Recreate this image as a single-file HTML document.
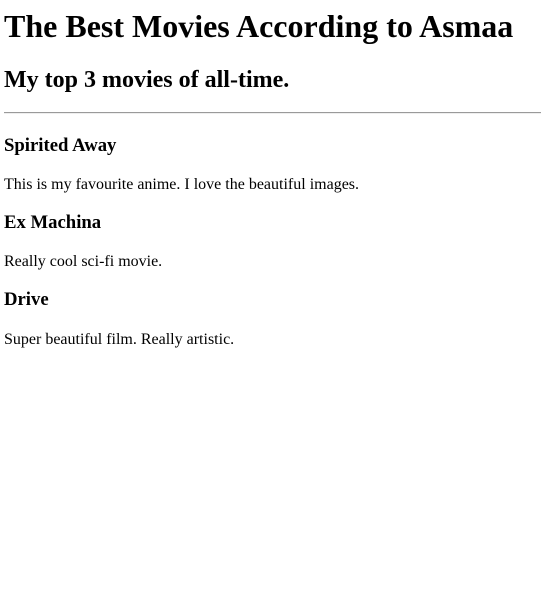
<!DOCTYPE html>
<html><head><meta charset="utf-8"><style>
html,body{background:#fff;}
body{margin:0 0 0 4px;font-family:"Liberation Serif",serif;color:#000;}
h1{font-size:32px;margin:8px 0 0;line-height:37px;}
h2{font-size:24px;margin:21.92px 0 17.92px;line-height:27.6px;}
hr{margin:8px 0 12px;border:0;border-top:1px solid #9a9a9a;border-bottom:1px solid #eee;height:0;}
h3{font-size:18.72px;margin:18.72px 0 19.72px;line-height:21.5px;}
hr + h3{margin-top:20.72px}
p{font-size:16px;margin:16px 0 0;line-height:18px;}
p + h3{margin-top:17.9px}
</style></head><body>
<h1>The Best Movies According to Asmaa</h1>
<h2>My top 3 movies of all-time.</h2>
<hr>
<h3>Spirited Away</h3>
<p>This is my favourite anime. I love the beautiful images.</p>
<h3>Ex Machina</h3>
<p>Really cool sci-fi movie.</p>
<h3>Drive</h3>
<p>Super beautiful film. Really artistic.</p>
</body></html>
